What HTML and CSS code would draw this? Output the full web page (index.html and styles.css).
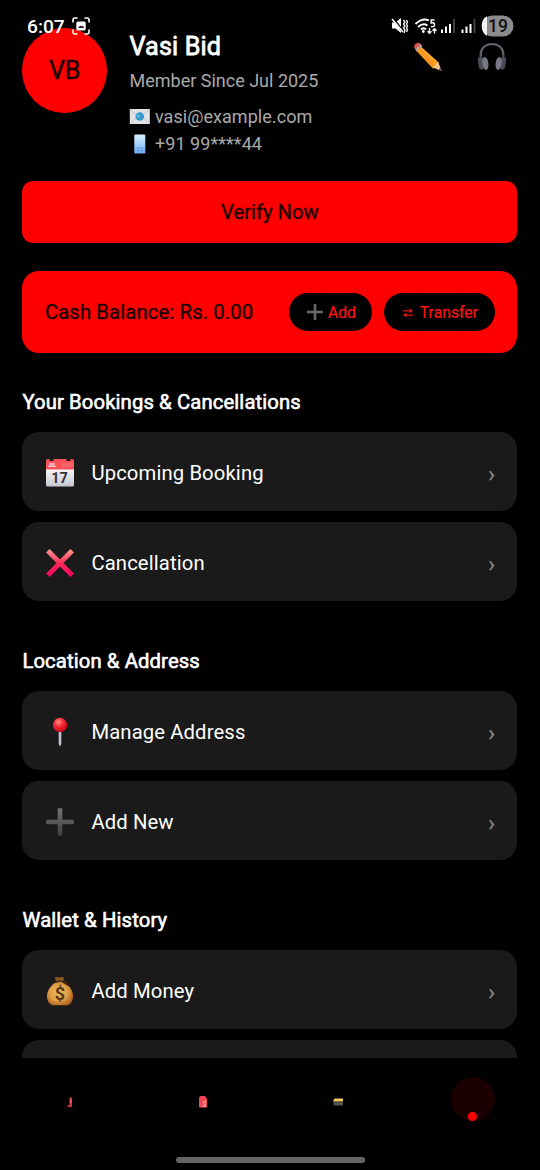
FILE: index.html
```html
<!DOCTYPE html>
<html lang="en">
<head>
<meta charset="utf-8">
<title>Profile</title>
<link rel="stylesheet" href="styles.css">
</head>
<body>
<div class="screen">
  <div class="status">
    <span class="time">6:07</span>
    <svg class="capture" width="18" height="18" viewBox="0 0 18 18" fill="none" stroke="#fff" stroke-width="1.6" stroke-linecap="round"><path d="M1 5V3q0-2 2-2h2M13 1h2q2 0 2 2v2M17 13v2q0 2-2 2h-2M5 17H3q-2 0-2-2v-2"/><rect x="4.3" y="4.6" width="9.400" height="8.800" rx="1.500" fill="#fff" stroke="none"/><path d="M6 11l2.200-2.600 1.600 1.200 1-1 1.400 2.400z" fill="#222" stroke="none"/></svg>
    <svg class="signals" width="126" height="22" viewBox="0 0 126 22" fill="none" stroke="#fff">
      <path d="M2 9.500h3.500L11 5v15l-5.500-4.500H2z" fill="#fff" stroke="none"/>
      <path d="M2.500 5l11 14" stroke="#000" stroke-width="2.600"/><path d="M2 6l11 13" stroke-width="1.600"/>
      <path d="M13.500 7l1.500 2-1.500 2 1.500 2-1.500 2 1.500 2-1 3M16.500 7l1 2-1 2 1 2-1 2 1 2-1 2" stroke-width="1.300"/>
      <path d="M25.500 11q7-6.500 13.500-3.500M28 14q5-4.500 9.500-1.500M31 16.500q3-2.500 5 0" stroke-width="1.900"/><circle cx="33.300" cy="18.500" r="1.400" fill="#fff" stroke="none"/>
      <path d="M44.500 7h-3.300v3q3.300-.8 3.300 1.700T41 13.500" stroke-width="1.500"/>
      <path d="M39.500 15v5M37.500 18.300l2 2 2-2M44.500 20.500v-5M42.500 17.700l2-2 2 2" stroke-width="1.400"/>
      <path d="M52 20v-3.500M56 20v-6.500M60 20v-9M72.500 20v-3.500M76.500 20v-6.500M80.500 20v-9" stroke-width="2"/>
      <path d="M64 20V6M84.500 20V6" stroke="#444" stroke-width="1.800"/>
      <rect x="92" y="2.500" width="31.500" height="21" rx="10.500" fill="#8c8c8c" stroke="none"/>
      <path d="M97 3.300v19.400C90 20 90 6 97 3.300z" fill="#f2f2f2" stroke="none"/>
      <text class="battery" x="108" y="19.300" text-anchor="middle">19</text>
    </svg>
  </div>

  <main class="content">
    <header class="profile">
      <div class="avatar">VB</div>
      <div class="info">
        <div class="name">Vasi Bid</div>
        <div class="member">Member Since Jul 2025</div>
        <div class="contact">
          <svg width="21" height="20" viewBox="0 0 21 20"><rect x=".8" y="2" width="20" height="15" fill="#e3e3e5"/><path d="M.8 17l7-7M20.800 17l-7-7M.8 2.500l7.500 6M20.800 2.500L13.300 8.500" stroke="#c6c6c8" fill="none"/><circle cx="10.800" cy="9.500" r="4.300" fill="#3498cc"/><path d="M8.300 7l3 1-1 3-3-1z" fill="#57b9df"/></svg>
          <span>vasi@example.com</span></div>
        <div class="contact">
          <svg width="21" height="20" viewBox="0 0 21 20"><defs><linearGradient id="ph" x2="0" y2="1"><stop stop-color="#d7f2ff"/><stop offset="1" stop-color="#74aef4"/></linearGradient></defs><rect x="5.300" y=".5" width="11" height="19" rx="1.200" fill="url(#ph)"/><path d="M6.500 14h9M6.500 16.500h9M9 13v6M12.500 13v6" stroke="#568fd8" stroke-width=".6"/></svg>
          <span>+91 99****44</span></div>
      </div>
      <div class="actions">
        <svg width="30" height="30" viewBox="0 0 30 30"><defs><linearGradient id="pen" x1="1" y1="0" x2="0" y2="1"><stop stop-color="#ffc34f"/><stop offset=".5" stop-color="#fb9b22"/><stop offset="1" stop-color="#df7410"/></linearGradient></defs><path d="M6.500 3.300L25.700 20.500l-5.600 6.200L2.700 8.300z" fill="url(#pen)"/><path d="M1.200 5.600Q.5 3.600 2.600 1.800T6.500 1L9 3.400 3.700 9z" fill="#d9514e"/><path d="M7.300 2l2 1.900-5.400 5.700-1.700-2z" fill="#b79a91"/><path d="M25.300 20l3.300 9-8.900-3.500z" fill="#efc28c"/><path d="M27.500 26l1.300 3.300-3.500-1.300z" fill="#555"/></svg>
        <svg width="30" height="30" viewBox="0 0 30 30" fill="none"><path d="M4 18C2 7 7 2 15 2s13 5 11 16" stroke="#53535d" stroke-width="2.200"/><path d="M4 14C4 6 9 2.500 15 2.500S26 6 26 13" stroke="#858590" stroke-width=".7"/><rect x="1.200" y="15" width="6" height="12.500" rx="3" fill="#4b4b55" transform="rotate(-8 4 21)"/><rect x="22.800" y="15" width="6" height="12.500" rx="3" fill="#4b4b55" transform="rotate(8 26 21)"/><ellipse cx="8.300" cy="21.500" rx="3" ry="6.500" fill="#777785" transform="rotate(-8 8 21)"/><ellipse cx="21.700" cy="21.500" rx="3" ry="6.500" fill="#777785" transform="rotate(8 22 21)"/></svg>
      </div>
    </header>

    <div class="verify">Verify Now</div>

    <section class="balance">
      <span class="amount">Cash Balance: Rs. 0.00</span>
      <div class="pill add"><svg width="18" height="18" viewBox="0 0 18 18"><path d="M9 1v16M1 9h16" stroke="#686868" stroke-width="2.600"/></svg><span>Add</span></div>
      <div class="pill transfer"><svg width="10" height="10" viewBox="0 0 10 10" fill="#e51414"><path d="M0 2.300h6.500V.6L10 3 6.500 5.300V3.500H0zM10 7.800H3.500v1.700L0 7.100l3.500-2.300v1.800H10z"/></svg><span>Transfer</span></div>
    </section>

    <section class="group">
      <h2>Your Bookings &amp; Cancellations</h2>
      <div class="item">
        <svg width="30" height="30" viewBox="0 0 30 30"><defs><linearGradient id="cal" x2="0" y2="1"><stop stop-color="#f8f8fa"/><stop offset="1" stop-color="#c7c7d2"/></linearGradient></defs><path d="M1 10h28v17q0 1.500-1.500 1.500h-25Q1 28.500 1 27z" fill="url(#cal)"/><path d="M1 3q0-2 2-2h1.500v2h4V1h13v2h4V1H27q2 0 2 2v8.500H1z" fill="#f95359"/><text class="cal-month" x="3" y="8.500">JUL</text><path d="M17 5v4M19 5v4M21 6v3M23 5v4M25 5v4M27 5v4" stroke="#fb8588" stroke-width=".7"/><text class="cal-day" x="14.500" y="25" text-anchor="middle">17</text></svg>
        <span class="label">Upcoming Booking</span><span class="chevron">›</span></div>
      <div class="item">
        <svg width="30" height="30" viewBox="0 0 30 30"><defs><linearGradient id="x" gradientUnits="userSpaceOnUse" x1="0" y1="1" x2="0" y2="29"><stop stop-color="#ff9a91"/><stop offset=".5" stop-color="#fb2d58"/><stop offset="1" stop-color="#f0005e"/></linearGradient></defs><path d="M4.600 4.600l20.800 20.800M25.400 4.600L4.600 25.400" stroke="url(#x)" stroke-width="5" stroke-linecap="square"/></svg>
        <span class="label">Cancellation</span><span class="chevron">›</span></div>
    </section>

    <section class="group">
      <h2>Location &amp; Address</h2>
      <div class="item">
        <svg width="30" height="30" viewBox="0 0 30 30"><defs><radialGradient id="pin" cx=".4" cy=".3" r=".7"><stop stop-color="#ff8f89"/><stop offset=".45" stop-color="#f32e37"/><stop offset="1" stop-color="#c6001b"/></radialGradient></defs><path d="M13.700 13h2.600v14L15 29.500 13.700 27z" fill="#c4c4d4"/><circle cx="15" cy="8" r="7.200" fill="url(#pin)"/></svg>
        <span class="label">Manage Address</span><span class="chevron">›</span></div>
      <div class="item">
        <svg width="30" height="30" viewBox="0 0 30 30"><defs><linearGradient id="plus" x2="0" y2="1"><stop stop-color="#737373"/><stop offset="1" stop-color="#3e3e3e"/></linearGradient></defs><path d="M12.700 2q0-.7.700-.7h3.200q.7 0 .7.700v10.700H28q.8 0 .8.800v3q0 .8-.8.800H17.300V28q0 .7-.7.700h-3.200q-.7 0-.7-.7V17.300H2q-.8 0-.8-.8v-3q0-.8.800-.8h10.700z" fill="url(#plus)"/></svg>
        <span class="label">Add New</span><span class="chevron">›</span></div>
    </section>

    <section class="group">
      <h2>Wallet &amp; History</h2>
      <div class="item">
        <svg width="30" height="30" viewBox="0 0 30 30"><defs><radialGradient id="bag" cx=".45" cy=".45" r=".6"><stop stop-color="#f2bd68"/><stop offset=".6" stop-color="#e19d45"/><stop offset="1" stop-color="#a8601c"/></radialGradient></defs><path d="M11 6L10 1.500q2-1 4 0 3-1 5 0L18 6z" fill="#8b5722"/><path d="M11.500 6h7c6 3 9.500 9 9.500 14 0 6-3 9.300-7 9.300H9c-4 0-7-3.300-7-9.300 0-5 3.500-11 9.500-14z" fill="url(#bag)"/><path d="M10.500 6.500q5-2.500 9 .4l4 2.400M18 6.500q4-2 4 2" fill="none" stroke="#42250f" stroke-width="1.500"/><text class="dollar" x="15" y="24.300" text-anchor="middle">$</text></svg>
        <span class="label">Add Money</span><span class="chevron">›</span></div>
      <div class="item"></div>
    </section>
  </main>

  <nav class="tabs">
    <div class="tab"><svg class="tab-first" width="6" height="12" viewBox="0 0 6 12"><path d="M2.500 1.500H5V11H.5V9.700l2-1z" fill="#cf3540"/><path d="M3 3h1.500v4H3z" fill="#f45c65"/></svg></div>
    <div class="tab"><svg width="10" height="14" viewBox="0 0 10 14"><path d="M2.500 1H7l2 3v8.500H2q-1 0-1-1V2.500z" fill="#f14550"/><path d="M5 6.500l3-1V12H4.500z" fill="#ff9ba0"/><path d="M5 11l2.500-4" stroke="#e33a45"/></svg></div>
    <div class="tab"><svg width="12" height="10" viewBox="0 0 12 10"><path d="M2.500 1.500H11v3H1z" fill="#f6cb67"/><path d="M1.500 5H11v3.500H1.500z" fill="#55534b"/></svg></div>
    <div class="tab"><div class="halo"><i class="dot"></i></div></div>
  </nav>
  <div class="home-bar"></div>
</div>
</body>
</html>
```
FILE: styles.css
```css
* { box-sizing: border-box; }
body { margin: 0; background: #000; font-family: Roboto, "Liberation Sans", sans-serif; color: #fff; }
svg { display: block; flex: none; }
.screen { position: relative; width: 540px; height: 1170px; display: flex; flex-direction: column; overflow: hidden; background: #000; }
.status { position: absolute; left: 0; right: 0; top: 13px; height: 26px; display: flex; padding: 0 24px 0 27px; z-index: 2; }
.time { font-size: 19.200px; font-weight: 500; line-height: 27px; width: 45px; white-space: nowrap; }
.capture { margin-top: 4px; }
.signals { margin-left: auto; overflow: visible; }
.battery { font-size: 17.500px; font-weight: 500; fill: #111; stroke: none; }
.content { height: 1057.500px; flex: none; overflow: hidden; padding: 28px 22.600px 0 22.400px; }
.profile { display: flex; height: 152.600px; }
.avatar { width: 84.500px; height: 84.500px; border-radius: 50%; background: #f00; color: #1a0000; font-size: 25px; -webkit-text-stroke: .5px; display: flex; align-items: center; justify-content: center; padding-top: 1px; }
.info { margin-left: 22.600px; }
.name { font-size: 25.200px; -webkit-text-stroke: .8px; letter-spacing: .12px; line-height: 30px; margin-top: 4px; }
.member { font-size: 18px; line-height: 22px; color: #aaa; margin: 8px 0 11px; }
.contact { display: flex; align-items: center; gap: 4.500px; font-size: 18px; line-height: 22px; height: 27px; color: #aaa; letter-spacing: .05px; }
.actions { margin-left: auto; display: flex; gap: 34px; padding: 14px 10px 0 0; }
.verify { height: 62px; border-radius: 11.250px; background: #f00; color: #1a0000; font-size: 20.250px; -webkit-text-stroke: .4px; display: flex; align-items: center; justify-content: center; }
.balance { margin-top: 28px; height: 82.500px; border-radius: 16.900px; background: #f00; padding: 0 22.500px; display: flex; align-items: center; }
.amount { color: #1a0000; font-size: 20.250px; letter-spacing: .13px; -webkit-text-stroke: .4px; margin-right: auto; padding-top: 1px; }
.pill { height: 38px; border-radius: 19px; background: #000; color: #fa1414; font-size: 15.750px; display: flex; align-items: center; justify-content: center; padding-top: 1px; -webkit-text-stroke: .2px; }
.add { width: 83px; gap: 4px; margin-right: 11.500px; }
.transfer { width: 111px; gap: 7px; padding-left: 2px; }
.transfer svg { margin-top: 2px; }
.group { height: 259.150px; padding-top: 35.700px; }
.group h2 { margin: 0 0 17px; font-size: 20.250px; font-weight: 400; letter-spacing: .12px; -webkit-text-stroke: .6px; line-height: 26px; }
.item { height: 79px; margin-bottom: 11px; border-radius: 16.900px; background: #1a1a1a; display: flex; align-items: center; padding: 3px 22.500px 0; }
.label { font-size: 20.250px; margin-left: 16.500px; letter-spacing: .12px; }
.chevron { margin-left: auto; color: #888; font-size: 22.500px; padding-top: 2px; -webkit-text-stroke: .3px; }
.cal-month { font-size: 4.500px; font-weight: 700; fill: #fff; }
.cal-day { font-size: 14.500px; font-weight: 700; fill: #34343b; }
.dollar { font-size: 18px; font-weight: 700; fill: #573710; }
.tabs { height: 88px; display: grid; grid-template-columns: repeat(4, 1fr); align-items: center; }
.tab { display: flex; justify-content: center; }
.tab-first { margin-left: 4px; }
.halo { width: 44px; height: 44px; border-radius: 50%; background: #1a0000; position: relative; top: -3px; }
.dot { position: absolute; left: 17px; top: 35px; width: 9px; height: 9px; border-radius: 50%; background: #f00; }
.home-bar { width: 189px; height: 6px; border-radius: 3px; background: #666; margin: 11.500px auto 0; }
```
